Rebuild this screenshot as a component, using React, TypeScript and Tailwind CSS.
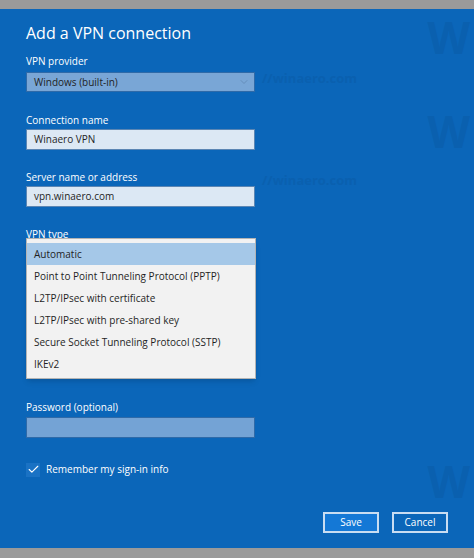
import { Check, ChevronDown } from 'lucide-react';

const VPN_TYPES = [
    'Automatic',
    'Point to Point Tunneling Protocol (PPTP)',
    'L2TP/IPsec with certificate',
    'L2TP/IPsec with pre-shared key',
    'Secure Socket Tunneling Protocol (SSTP)',
    'IKEv2',
];

const font = { fontFamily: '"Open Sans", "Noto Sans", "Liberation Sans", sans-serif' };

function Label({ children, className = '' }: { children: React.ReactNode; className?: string }) {
    return <div className={`text-[10px] leading-[14px] text-white ${className}`}>{children}</div>;
}

function TextBox({ value, className = '' }: { value: string; className?: string }) {
    return (
        <div className={`w-[229px] h-[21px] border border-[#5b86b4] bg-[#dce8f4] px-[7px] flex items-center text-[10px] text-[#1f1f1f] ${className}`}>
            {value}
        </div>
    );
}

export default function App() {
    return (
        <div className="w-[474px] h-[558px] flex flex-col overflow-hidden" style={font}>
            <div className="h-[9px] bg-[#9a9a9a] shrink-0" />

            <div className="relative flex-1 bg-[#0b66b9] px-[26px] flex flex-col">
                {/* faint watermarks */}
                <div className="absolute right-[4px] top-[6px] text-[44px] font-bold leading-none text-[#0a60af] select-none">W</div>
                <div className="absolute right-[4px] top-[100px] text-[44px] font-bold leading-none text-[#0a60af] select-none">W</div>
                <div className="absolute right-[4px] top-[450px] text-[44px] font-bold leading-none text-[#0a60af] select-none">W</div>
                <div className="absolute left-[262px] top-[60px] text-[13px] font-bold text-[#0a60af] select-none">//winaero.com</div>
                <div className="absolute left-[262px] top-[162px] text-[13px] font-bold text-[#0a60af] select-none">//winaero.com</div>

                <h1 className="relative mt-[12px] text-[16px] leading-[24px] text-white font-normal">Add a VPN connection</h1>

                <Label className="relative mt-[9px]">VPN provider</Label>
                <div className="relative mt-[4px] w-[229px] h-[20px] border border-[#2f6aa8] bg-[#79a6d6] pl-[7px] pr-[4px] flex items-center justify-between text-[10px] text-[#1f1f1f]">
                    <span>Windows (built-in)</span>
                    <ChevronDown size={12} strokeWidth={1.5} className="text-[#5f87b1]" />
                </div>

                <Label className="relative mt-[21px]">Connection name</Label>
                <TextBox value="Winaero VPN" className="relative mt-[2px]" />

                <Label className="relative mt-[20px]">Server name or address</Label>
                <TextBox value="vpn.winaero.com" className="relative mt-[2px]" />

                <div className="relative mt-[20px]">
                    <Label>VPN type</Label>
                    <div className="absolute left-0 top-[11px] w-[230px] border border-[#b4b4b4] bg-[#f2f2f2] pt-[4px] pb-[3px] shadow-md z-10">
                        {VPN_TYPES.map((t, i) => (
                            <div
                                key={t}
                                className={`h-[22px] px-[7px] flex items-center text-[10px] text-[#1f1f1f] ${i === 0 ? 'bg-[#a5c8e8]' : ''}`}
                            >
                                {t}
                            </div>
                        ))}
                    </div>
                </div>

                <Label className="relative mt-[159px]">Password (optional)</Label>
                <div className="relative mt-[3px] w-[229px] h-[21px] border border-[#2f6aa8] bg-[#74a3d5]" />

                <div className="relative mt-[24px] flex items-center gap-[6px]">
                    <div className="w-[14px] h-[14px] bg-[#1a72c4] flex items-center justify-center">
                        <Check size={13} strokeWidth={2} className="text-white" />
                    </div>
                    <span className="text-[10px] text-white">Remember my sign-in info</span>
                </div>

                <div className="relative mt-auto mb-[15px] ml-[297px] flex gap-[13px]">
                    <button className="w-[62px] h-[21px] border-2 border-[#c9ddf2] bg-[#1478d6] text-[10px] text-white">Save</button>
                    <button className="w-[62px] h-[21px] border-2 border-[#c9ddf2] bg-[#0b66b9] text-[10px] text-white">Cancel</button>
                </div>
            </div>

            <div className="h-[10px] bg-[#9a9a9a] shrink-0" />
        </div>
    );
}
